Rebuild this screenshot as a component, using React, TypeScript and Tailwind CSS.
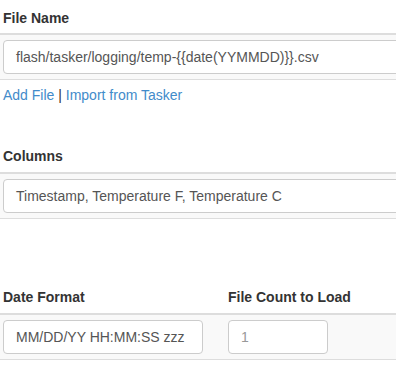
const font = { fontFamily: '"Liberation Sans", Arial, sans-serif' };

const Field = ({ value, placeholder, width }: { value?: string; placeholder?: string; width: string }) => (
  <div
    className={`flex h-[34px] items-center rounded-[4px] border border-[#ccc] bg-white px-3 text-[14px] ${width} ${
      value ? 'text-[#555]' : 'text-[#999]'
    }`}
  >
    {value ?? placeholder}
  </div>
);

const Band = ({ children }: { children: React.ReactNode }) => (
  <div className="border-t-2 border-b border-[#ddd] bg-[#f9f9f9] pt-[5px] pb-[5px]">{children}</div>
);

const Label = ({ children, className = '' }: { children: React.ReactNode; className?: string }) => (
  <div className={`h-5 text-[14px] font-bold leading-5 text-[#333] ${className}`}>{children}</div>
);

export default function App() {
  return (
    <div className="h-[374px] w-[396px] overflow-hidden bg-white" style={font}>
      <div className="w-[440px]">
        <div className="pt-2">
          <Label className="mb-[5px] pl-[3px]">File Name</Label>
          <Band>
            <div className="pl-[3px]">
              <Field value="flash/tasker/logging/temp-{{date(YYMMDD)}}.csv" width="w-[430px]" />
            </div>
          </Band>
          <div className="mt-[5px] pl-[3px] text-[14px] leading-5 text-[#333]">
            <a className="text-[#428bca]">Add File</a> | <a className="text-[#428bca]">Import from Tasker</a>
          </div>
        </div>

        <div className="mt-[41px]">
          <Label className="mb-[6px] pl-[3px]">Columns</Label>
          <Band>
            <div className="pl-[3px]">
              <Field value="Timestamp, Temperature F, Temperature C" width="w-[430px]" />
            </div>
          </Band>
        </div>

        <div className="mt-[68px]">
          <div className="mb-[6px] flex">
            <Label className="w-[225px] pl-[3px]">Date Format</Label>
            <Label className="pl-[3px]">File Count to Load</Label>
          </div>
          <Band>
            <div className="flex">
              <div className="w-[225px] pl-[3px]">
                <Field value="MM/DD/YY HH:MM:SS zzz" width="w-[200px]" />
              </div>
              <div className="pl-[3px]">
                <Field placeholder="1" width="w-[100px]" />
              </div>
            </div>
          </Band>
        </div>
      </div>
    </div>
  );
}
